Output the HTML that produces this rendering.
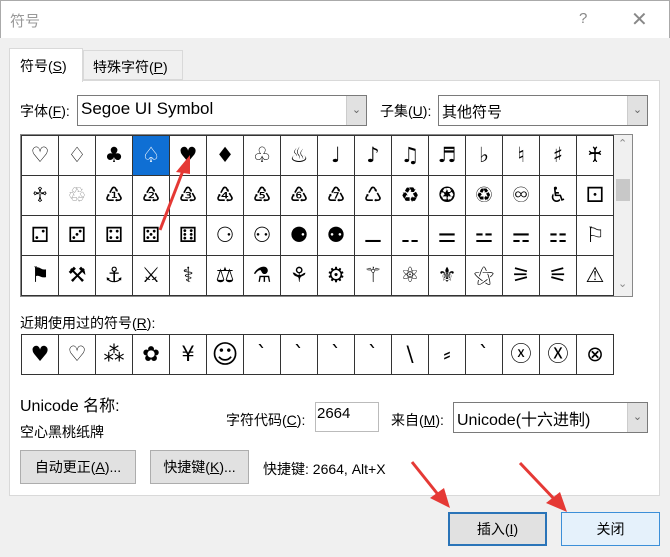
<!DOCTYPE html>
<html><head><meta charset="utf-8"><style>
*{box-sizing:border-box;margin:0;padding:0}
body{width:670px;height:557px;background:#f0f0f0;font-family:"Liberation Sans","Noto Sans CJK SC",sans-serif;font-size:14px;color:#000;position:relative;overflow:hidden}
.abs{position:absolute}
.title{left:0;top:0;width:670px;height:38px;background:#fff;border:1px solid #aaa;border-bottom:none}
.panel{left:9px;top:80px;width:651px;height:416px;background:#fff;border:1px solid #d9d9d9}
.combo{background:#fff;border:1px solid #7a7a7a;height:31px;font-size:17px;padding:3px 3px}
.dd{position:absolute;right:0;top:0;width:20px;height:29px;background:#e1e1e1;border-left:1px solid #ccc;color:#666;font-size:11px;text-align:center;line-height:29px}
table{border-collapse:collapse;position:absolute}
td{border:1px solid #333;width:37px;height:40px;text-align:center;font-family:"DejaVu Sans",sans-serif;font-size:21px;line-height:1}
.btn{background:#e1e1e1;border:1px solid #adadad;text-align:center;font-size:14px}
u{text-decoration:underline}
</style></head><body>
<div class="abs title"><span class="abs" style="left:9px;top:9px;color:#999;font-size:15px">符号</span><span class="abs" style="left:578px;top:9px;color:#888;font-size:15px">?</span><span class="abs" style="left:630px;top:6px;color:#888;font-size:20px">✕</span></div>
<div class="abs" style="left:9px;top:48px;width:74px;height:34px;background:#fff;border:1px solid #d9d9d9;border-bottom:none;z-index:2"></div>
<div class="abs" style="left:83px;top:50px;width:100px;height:30px;background:#f0f0f0;border:1px solid #d9d9d9"></div>
<div class="abs panel"></div>
<span class="abs" style="left:20px;top:56px;z-index:3">符号(<u>S</u>)</span>
<span class="abs" style="left:93px;top:57px">特殊字符(<u>P</u>)</span>
<span class="abs" style="left:20px;top:101px">字体(<u>F</u>):</span>
<div class="abs combo" style="left:77px;top:95px;width:290px">Segoe UI Symbol<div class="dd">⌄</div></div>
<span class="abs" style="left:380px;top:101px">子集(<u>U</u>):</span>
<div class="abs combo" style="left:438px;top:95px;width:210px;font-size:15px;padding-top:5px">其他符号<div class="dd">⌄</div></div>
<div class="abs" style="left:20px;top:134px;width:613px;height:163px;border:1px solid #888;background:#fff"></div>
<table style="left:21px;top:135px">
<tr><td>♡</td><td>♢</td><td>♣</td><td style="background:#0f6fd4;color:#fff">♤</td><td>♥</td><td>♦</td><td>♧</td><td>♨</td><td>♩</td><td>♪</td><td>♫</td><td>♬</td><td>♭</td><td>♮</td><td>♯</td><td>♰</td></tr>
<tr><td>♱</td><td style="color:#999">♲</td><td>♳</td><td>♴</td><td>♵</td><td>♶</td><td>♷</td><td>♸</td><td>♹</td><td>♺</td><td>♻</td><td>♼</td><td>♽</td><td>♾</td><td>♿</td><td>⚀</td></tr>
<tr><td>⚁</td><td>⚂</td><td>⚃</td><td>⚄</td><td>⚅</td><td>⚆</td><td>⚇</td><td>⚈</td><td>⚉</td><td>⚊</td><td>⚋</td><td>⚌</td><td>⚍</td><td>⚎</td><td>⚏</td><td>⚐</td></tr>
<tr><td>⚑</td><td>⚒</td><td>⚓</td><td>⚔</td><td>⚕</td><td>⚖</td><td>⚗</td><td>⚘</td><td>⚙</td><td>⚚</td><td>⚛</td><td>⚜</td><td>⚝</td><td>⚞</td><td>⚟</td><td>⚠</td></tr>
</table>
<div class="abs" style="left:614px;top:135px;width:18px;height:161px;background:#f0f0f0"><span class="abs" style="left:4px;top:2px;color:#888;font-size:11px">⌃</span><div class="abs" style="left:2px;top:44px;width:14px;height:22px;background:#c8c8c8"></div><span class="abs" style="left:4px;top:142px;color:#888;font-size:11px">⌄</span></div>
<span class="abs" style="left:20px;top:313px">近期使用过的符号(<u>R</u>):</span>
<table style="left:21px;top:334px;border:1px solid #888">
<tr><td>♥</td><td>♡</td><td>⁂</td><td>✿</td><td>¥</td><td style="font-size:26px">☺</td><td>ˋ</td><td>ˋ</td><td>ˋ</td><td>ˋ</td><td>\</td><td>⸗</td><td>ˋ</td><td>ⓧ</td><td>Ⓧ</td><td>⊗</td></tr>
</table>
<span class="abs" style="left:20px;top:392px;font-size:16px">Unicode 名称:</span>
<span class="abs" style="left:20px;top:422px">空心黑桃纸牌</span>
<span class="abs" style="left:226px;top:410px">字符代码(<u>C</u>):</span>
<div class="abs combo" style="left:315px;top:402px;width:64px;height:30px;border-color:#bbb;font-size:15px;padding:2px 1px">2664</div>
<span class="abs" style="left:391px;top:410px">来自(<u>M</u>):</span>
<div class="abs combo" style="left:453px;top:402px;width:195px;font-size:16px">Unicode(十六进制)<div class="dd">⌄</div></div>
<div class="abs btn" style="left:20px;top:450px;width:116px;height:34px;line-height:32px">自动更正(<u>A</u>)...</div>
<div class="abs btn" style="left:150px;top:450px;width:99px;height:34px;line-height:32px">快捷键(<u>K</u>)...</div>
<span class="abs" style="left:263px;top:459px">快捷键: 2664, Alt+X</span>
<div class="abs btn" style="left:448px;top:512px;width:99px;height:34px;line-height:30px;border:2px solid #2a74b8">插入(<u>I</u>)</div>
<div class="abs btn" style="left:561px;top:512px;width:99px;height:34px;line-height:32px;background:#e5f1fb;border-color:#3c8fd8">关闭</div>
<svg class="abs" style="left:0;top:0" width="670" height="557">
<g stroke="#e53935" stroke-width="3" fill="#e53935">
<line x1="160" y1="230" x2="184" y2="168"/><polygon points="190,155 176,172 190,174" stroke="none"/>
<line x1="412" y1="462" x2="440" y2="497"/><polygon points="450,508 430,498 444,488" stroke="none"/>
<line x1="520" y1="463" x2="557" y2="502"/><polygon points="567,512 546,503 560,492" stroke="none"/>
</g></svg>
</body></html>
